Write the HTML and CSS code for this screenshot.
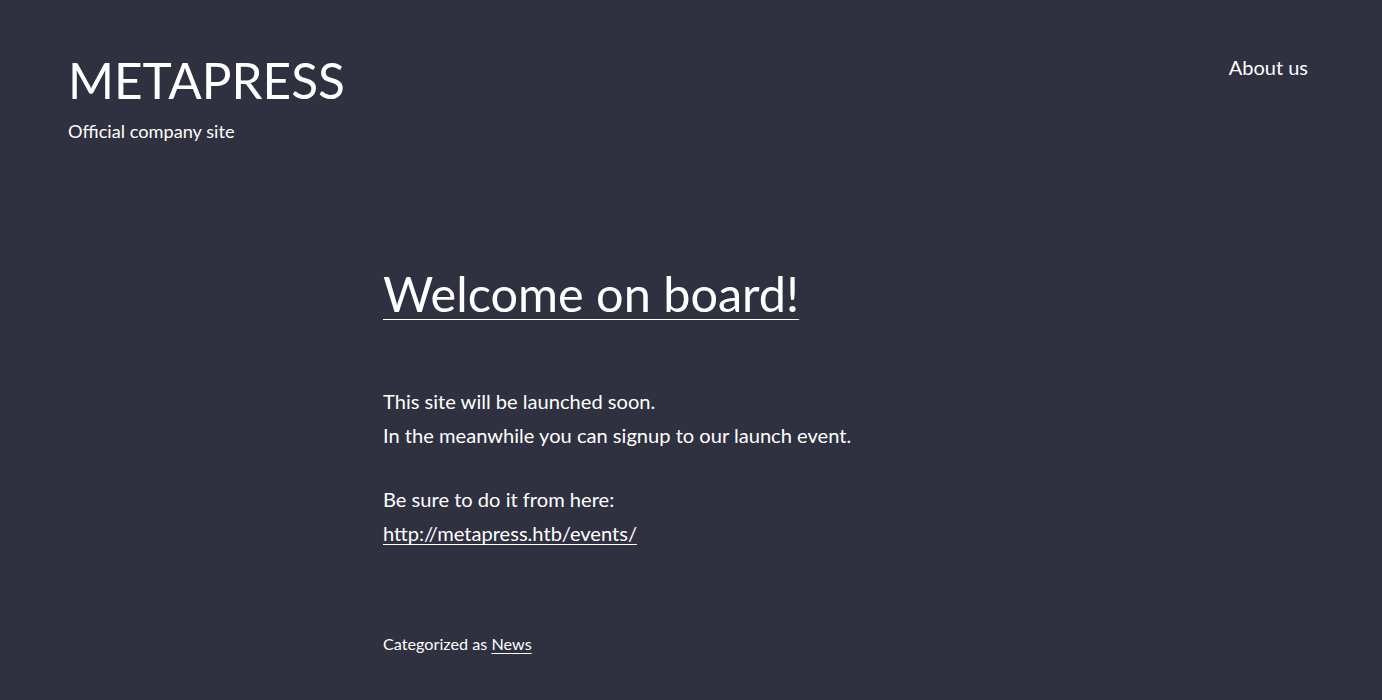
FILE: index.html
```html
<!DOCTYPE html>
<html lang="en">
<head>
<meta charset="utf-8">
<title>METAPRESS</title>
<link rel="stylesheet" href="styles.css">
</head>
<body>
<header class="site-header">
  <div class="branding">
    <h1 class="site-title">METAPRESS</h1>
    <p class="site-tagline">Official company site</p>
  </div>
  <nav class="site-nav">
    <a href="#">About us</a>
  </nav>
</header>
<main class="content">
  <h2 class="post-title"><a href="#">Welcome on board!</a></h2>
  <div class="post-body">
    <p>This site will be launched soon.<br>In the meanwhile you can signup to our launch event.</p>
    <p>Be sure to do it from here:<br><a href="#">http://metapress.htb/events/</a></p>
  </div>
  <p class="post-meta">Categorized as <a href="#">News</a></p>
</main>
</body>
</html>
```
FILE: styles.css
```css
html, body {
  margin: 0;
  padding: 0;
}
body {
  background: #2f3040;
  color: #ffffff;
  font-family: Lato, "Open Sans", sans-serif;
  min-height: 700px;
}
a {
  color: #ffffff;
  text-decoration: underline;
  text-decoration-thickness: 1px;
  text-underline-offset: 3px;
}
.site-header {
  display: flex;
  justify-content: space-between;
  align-items: flex-start;
  padding: 50px 74px 0 68px;
}
.site-title {
  margin: 0;
  font-size: 49.5px;
  font-weight: 400;
  line-height: 60px;
}
.site-tagline {
  margin: 10px 0 0;
  font-size: 18.2px;
  line-height: 22px;
}
.site-nav {
  padding-top: 5px;
  font-size: 20px;
  line-height: 24px;
}
.site-nav a {
  text-decoration: none;
}
.content {
  max-width: 616px;
  margin: 0 auto;
  padding-top: 121px;
}
.post-title {
  margin: 0;
  font-size: 48.6px;
  font-weight: 400;
  line-height: 60px;
}
.post-title a {
  text-underline-offset: 7px;
}
.post-body {
  margin-top: 61px;
  font-size: 20.1px;
  line-height: 34px;
}
.post-body p {
  margin: 0 0 30px;
}
.post-body p:last-child {
  margin-bottom: 0;
}
.post-meta {
  margin: 81px 0 0;
  font-size: 16.2px;
  line-height: 25.6px;
}
```
